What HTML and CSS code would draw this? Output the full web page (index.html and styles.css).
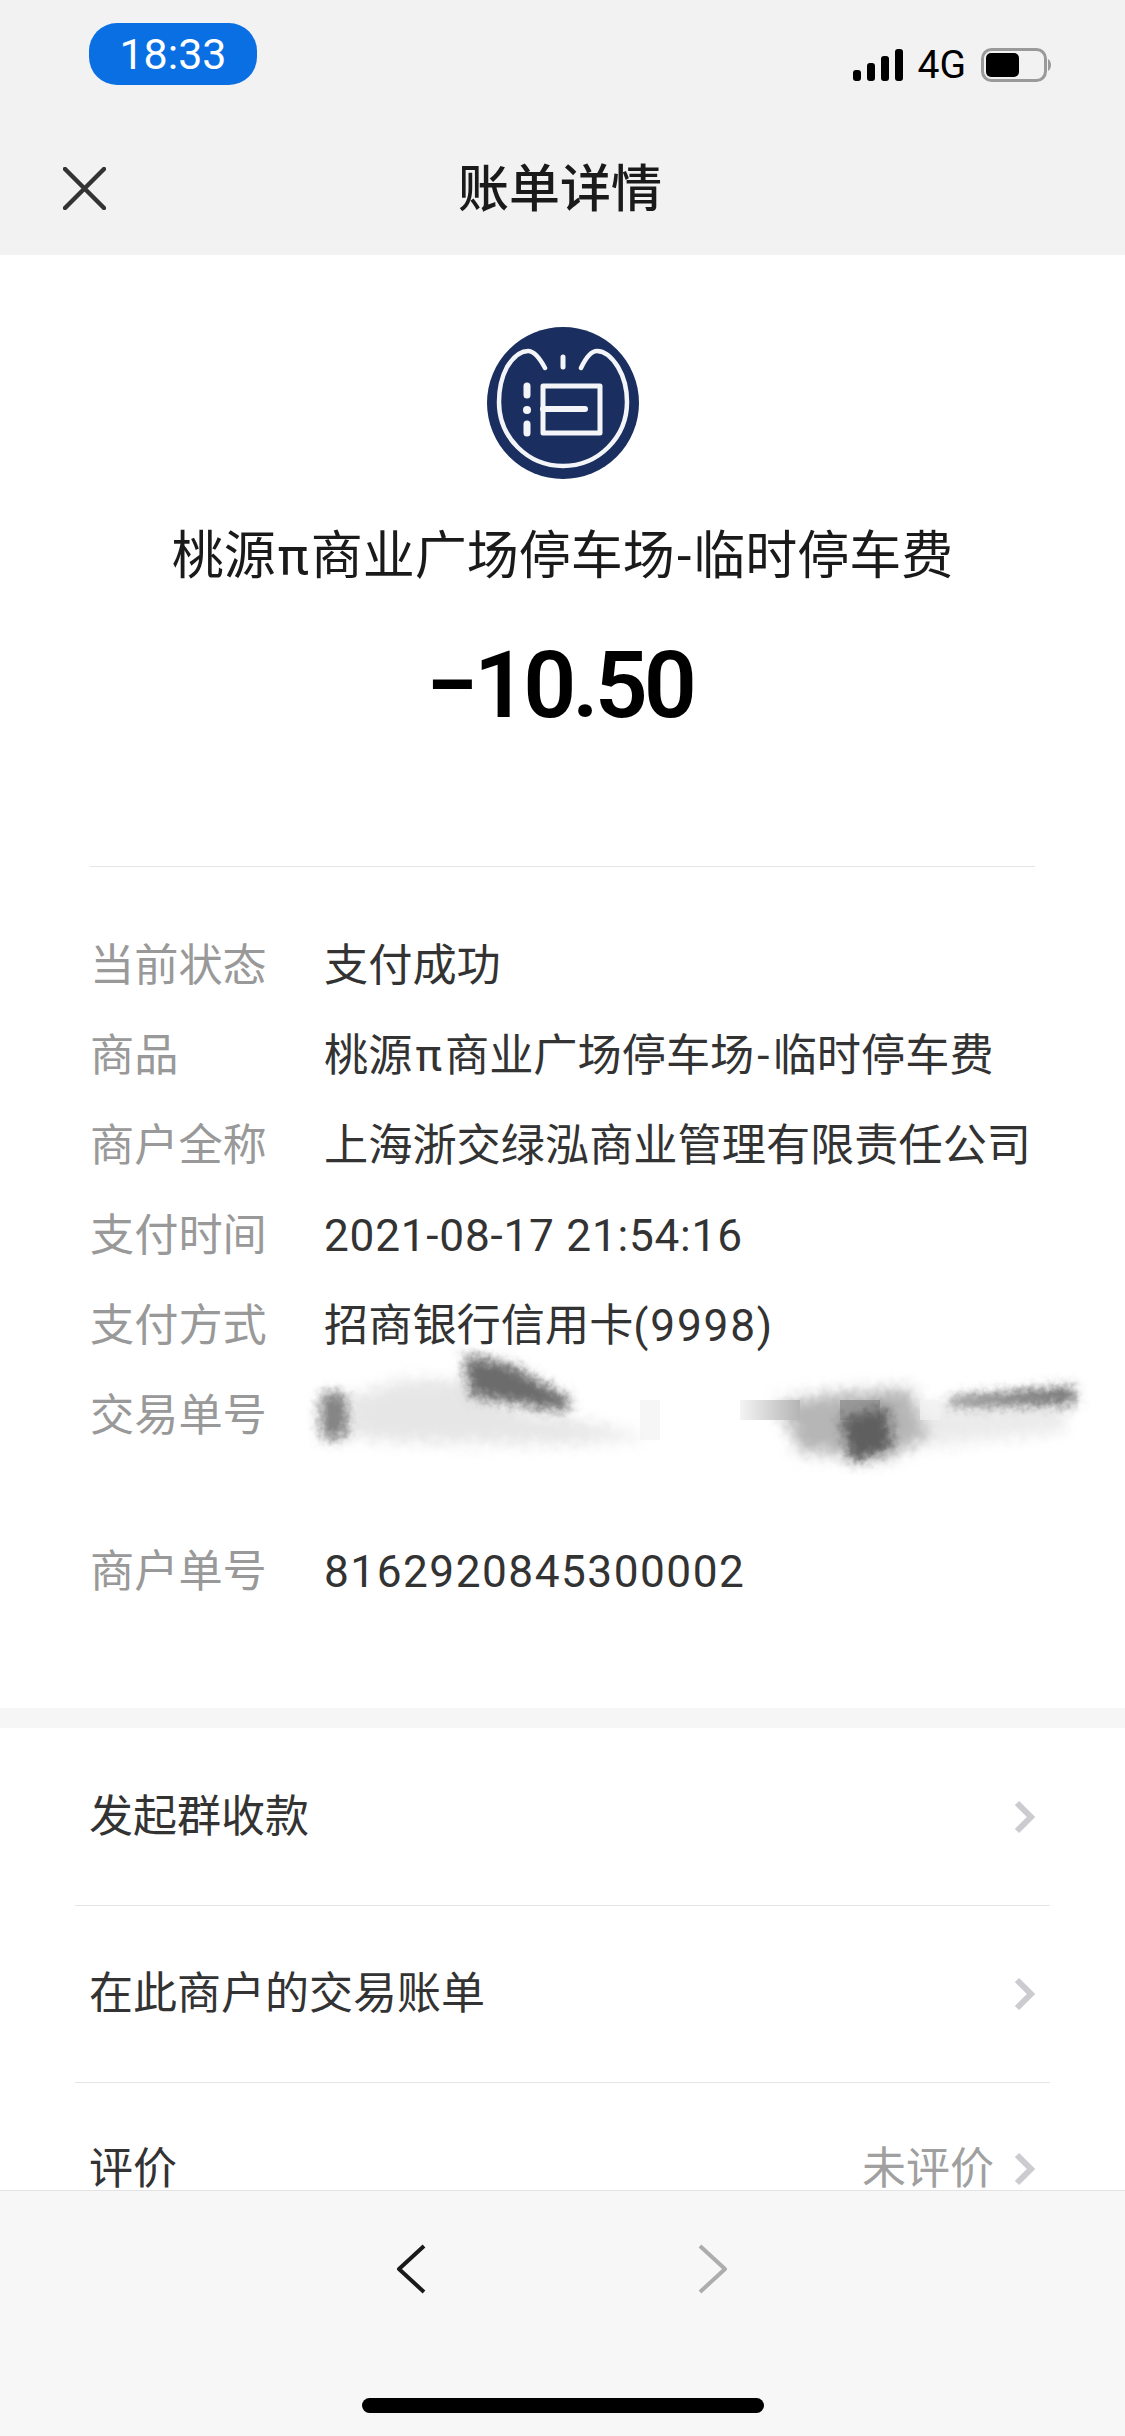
FILE: index.html
```html
<!DOCTYPE html>
<html lang="zh-CN">
<head>
  <meta charset="UTF-8">
  <title>账单详情</title>
  <meta name="viewport" content="width=device-width, initial-scale=1.0">
  <link rel="stylesheet" href="styles.css">
</head>
<body>
  <div class="status-bar">
    <div class="time-pill">18:33</div>
    <div class="status-icons">
      <svg class="signal" width="50" height="32" viewBox="0 0 50 32">
        <rect x="0" y="21" width="8" height="11" rx="3"/>
        <rect x="14" y="14" width="8" height="18" rx="3"/>
        <rect x="28" y="7" width="8" height="25" rx="3"/>
        <rect x="42" y="0" width="8" height="32" rx="3"/>
      </svg>
      <span class="network">4G</span>
      <svg class="battery" width="71" height="34" viewBox="0 0 71 34">
        <rect x="1.5" y="1.5" width="63" height="31" rx="9" fill="none" stroke="#9a9a9a" stroke-width="3"/>
        <rect x="5" y="5" width="33" height="24" rx="5" fill="#000"/>
        <path d="M67 11 C71 13 71 21 67 23 Z" fill="#9a9a9a"/>
      </svg>
    </div>
  </div>

  <div class="nav-bar">
    <svg class="close-icon" width="43" height="43" viewBox="0 0 43 43">
      <path d="M2 2 L41 41 M41 2 L2 41" fill="none" stroke="#333" stroke-width="4.5" stroke-linecap="round"/>
    </svg>
    <div class="nav-title">账单详情</div>
  </div>

  <div class="content">
    <div class="summary">
      <svg class="merchant-logo" width="152" height="152" viewBox="0 0 152 152">
        <circle cx="76" cy="76" r="76" fill="#1a2f5f"/>
        <g fill="none" stroke="#f4f5f8" stroke-linecap="round">
          <path stroke-width="4.5" d="M58 41 Q49 24 41 24 Q30 24 20 40 Q12 55 12 75 A64 64 0 0 0 140 75 Q140 55 131 40 Q121 24 110 24 Q102 24 94 41"/>
          <path stroke-width="5" d="M76 30 V40"/>
          <path stroke-width="7" d="M40 59 V68 M40 97 V106"/>
          <path stroke-width="5" d="M56 59 H113 V106 H56 Z" stroke-linejoin="round"/>
          <path stroke-width="6" d="M56 82 H98"/>
        </g>
        <circle cx="40" cy="83" r="4" fill="#f4f5f8"/>
      </svg>
      <div class="merchant-name">桃源<span class="sym">π</span>商业广场停车场<span class="sym">-</span>临时停车费</div>
      <div class="amount">−10.50</div>
    </div>

    <div class="details">
      <div class="detail-row"><span class="detail-label">当前状态</span><span class="detail-value">支付成功</span></div>
      <div class="detail-row"><span class="detail-label">商品</span><span class="detail-value">桃源<span class="sym">π</span>商业广场停车场<span class="sym">-</span>临时停车费</span></div>
      <div class="detail-row"><span class="detail-label">商户全称</span><span class="detail-value">上海浙交绿泓商业管理有限责任公司</span></div>
      <div class="detail-row"><span class="detail-label">支付时间</span><span class="detail-value date-text">2021-08-17 21:54:16</span></div>
      <div class="detail-row"><span class="detail-label">支付方式</span><span class="detail-value">招商银行信用卡<span class="card-tail">(9998)</span></span></div>
      <div class="detail-row detail-row-tall">
        <span class="detail-label">交易单号</span>
        <!-- smudged out number, viewBox uses page coordinates -->
        <svg class="smudge" width="800" height="140" viewBox="300 1340 800 140">
          <defs>
            <filter id="soft" x="-30%" y="-40%" width="160%" height="180%">
              <feGaussianBlur stdDeviation="8" result="blur"/>
              <feTurbulence type="fractalNoise" baseFrequency="0.1" numOctaves="2" seed="7" result="noise"/>
              <feDisplacementMap in="blur" in2="noise" scale="10" xChannelSelector="R" yChannelSelector="G"/>
            </filter>
            <filter id="rough" x="-30%" y="-40%" width="160%" height="180%">
              <feGaussianBlur stdDeviation="6" result="blur"/>
              <feTurbulence type="fractalNoise" baseFrequency="0.14" numOctaves="2" seed="4" result="noise"/>
              <feDisplacementMap in="blur" in2="noise" scale="10" xChannelSelector="R" yChannelSelector="G"/>
            </filter>
            <linearGradient id="tile-fade">
              <stop offset="0" stop-color="#f4f4f4"/>
              <stop offset="1" stop-color="#b4b4b4"/>
            </linearGradient>
          </defs>
          <g filter="url(#soft)">
            <path d="M350 1398 L400 1380 L465 1380 L520 1412 L600 1425 L650 1438 L560 1444 L400 1442 L350 1436 Z" fill="#e6e6e6"/>
            <path d="M778 1402 L830 1394 L910 1388 L930 1438 L885 1458 L800 1452 Z" fill="#b6b6b6"/>
            <path d="M920 1406 L1068 1400 L1064 1432 L930 1446 Z" fill="#ebebeb"/>
          </g>
          <rect class="smudge-tile" x="640" y="1400" width="20" height="40"/>
          <rect x="740" y="1400" width="60" height="20" fill="url(#tile-fade)"/>
          <rect class="smudge-tile" x="920" y="1400" width="20" height="20"/>
          <rect class="smudge-tile-dark" x="840" y="1400" width="40" height="20"/>
          <g filter="url(#rough)">
            <rect x="320" y="1392" width="28" height="48" rx="10" fill="#848484"/>
            <path d="M464 1354 L510 1364 L572 1400 L564 1412 L470 1396 Z" fill="#6c6c6c"/>
            <path d="M840 1418 L888 1406 L892 1448 L852 1464 Z" fill="#5e5e5e"/>
            <path d="M950 1398 L1074 1386 L1076 1404 L950 1406 Z" fill="#707070"/>
          </g>
        </svg>
      </div>
      <div class="detail-row"><span class="detail-label">商户单号</span><span class="detail-value order-no">8162920845300002</span></div>
    </div>

    <div class="section-gap"></div>

    <div class="menu">
      <div class="menu-row">
        <span class="menu-text">发起群收款</span>
        <svg class="menu-arrow" width="21" height="34" viewBox="0 0 21 34"><path d="M3 3 L17 17 L3 31" fill="none" stroke="#cbcbd0" stroke-width="6"/></svg>
      </div>
      <div class="menu-row">
        <span class="menu-text">在此商户的交易账单</span>
        <svg class="menu-arrow" width="21" height="34" viewBox="0 0 21 34"><path d="M3 3 L17 17 L3 31" fill="none" stroke="#cbcbd0" stroke-width="6"/></svg>
      </div>
      <div class="menu-row menu-row-last">
        <span class="menu-text">评价</span>
        <span class="menu-note">未评价</span>
        <svg class="menu-arrow" width="21" height="34" viewBox="0 0 21 34"><path d="M3 3 L17 17 L3 31" fill="none" stroke="#cbcbd0" stroke-width="6"/></svg>
      </div>
    </div>
  </div>

  <div class="bottom-bar">
    <div class="bottom-nav">
      <svg width="30" height="50" viewBox="0 0 30 50"><path d="M28 2 L3 25 L28 48" fill="none" stroke="#1a1a1a" stroke-width="4" stroke-linejoin="round"/></svg>
      <svg width="30" height="50" viewBox="0 0 30 50"><path d="M2 2 L27 25 L2 48" fill="none" stroke="#adadad" stroke-width="4" stroke-linejoin="round"/></svg>
    </div>
    <div class="home-indicator"></div>
  </div>
</body>
</html>
```

FILE: styles.css
```css
* {
  box-sizing: border-box;
}

body {
  margin: 0;
  width: 1125px;
  height: 2436px;
  overflow: hidden;
  display: flex;
  flex-direction: column;
  background: #fff;
  color: #333;
  font-family: Roboto, "Noto Sans CJK SC", sans-serif;
}

.status-bar {
  height: 120px;
  background: #f2f2f3;
  display: flex;
  justify-content: space-between;
  padding: 23px 73px 0 89px;
}

.time-pill {
  width: 168px;
  height: 62px;
  border-radius: 28px;
  background: #0a6fe3;
  color: #fff;
  font-size: 43px;
  line-height: 62px;
  text-align: center;
}

.status-icons {
  height: 34px;
  margin-top: 25px;
  display: flex;
  align-items: center;
}

.signal {
  margin-right: 15px;
}

.network {
  color: #000;
  font-size: 39px;
  line-height: 34px;
  margin-right: 15px;
}

.nav-bar {
  height: 135px;
  flex-shrink: 0;
  background: #f2f2f3;
  position: relative;
  display: flex;
  align-items: center;
  justify-content: center;
  padding-right: 5px;
}

.close-icon {
  position: absolute;
  left: 63px;
  top: 47px;
}

.nav-title {
  color: #1a1a1a;
  font-size: 51px;
  font-weight: 500;
  line-height: 70px;
  margin-top: 5px;
}

.content {
  flex: 1;
}

.summary {
  display: flex;
  flex-direction: column;
  align-items: center;
  padding-top: 72px;
}

.merchant-logo {
  display: block;
}

.merchant-name {
  margin-top: 43px;
  color: #1a1a1a;
  font-size: 52px;
  line-height: 70px;
  white-space: nowrap;
}

.sym {
  padding: 0 0.04em;
}

.amount {
  margin-top: 44px;
  padding-right: 6px;
  color: #000;
  font-size: 93px;
  font-weight: 600;
  line-height: 100px;
  letter-spacing: -4px;
}

.details {
  margin: 130px 90px 0;
  padding: 54px 0 91px;
  border-top: 1px solid #e5e5e5;
}

.detail-row {
  display: flex;
  height: 90px;
  font-size: 44.2px;
  line-height: 90px;
  white-space: nowrap;
}

.detail-row-tall {
  height: 156px;
  position: relative;
}

.detail-label {
  width: 234px;
  color: #999;
}

.detail-value {
  color: #333;
}

.detail-value .sym {
  padding: 0 0.07em;
}

.date-text {
  letter-spacing: 0.75px;
}

.order-no {
  letter-spacing: 1.5px;
}

.card-tail {
  letter-spacing: 1.8px;
}

.smudge {
  position: absolute;
  left: 210px;
  top: -31px;
}

.smudge-tile {
  fill: #f2f2f2;
  opacity: 0.7;
}

.smudge-tile-dark {
  fill: #999;
}

.section-gap {
  height: 20px;
  background: #f6f6f6;
}

.menu {
  padding: 1px 75px 0;
}

.menu-row {
  height: 177px;
  display: flex;
  align-items: center;
  gap: 20px;
  padding: 0 15px 0 14px;
  border-bottom: 1px solid #e5e5e5;
  font-size: 44px;
  line-height: 38px;
  color: #333;
}

.menu-text {
  flex: 1;
}

/* only the top of this row shows above the bottom bar */
.menu-row-last {
  height: 105px;
  padding-top: 67px;
  border-bottom: none;
}

.menu-note {
  color: #a0a0a0;
}

.bottom-bar {
  height: 246px;
  flex-shrink: 0;
  background: #f7f7f7;
  border-top: 1px solid #e3e3e3;
  display: flex;
  flex-direction: column;
  align-items: center;
}

.bottom-nav {
  width: 332px;
  margin-top: 53px;
  margin-left: -1px;
  display: flex;
  justify-content: space-between;
}

.home-indicator {
  width: 402px;
  height: 15px;
  margin-top: 104px;
  border-radius: 8px;
  background: #000;
}
```
